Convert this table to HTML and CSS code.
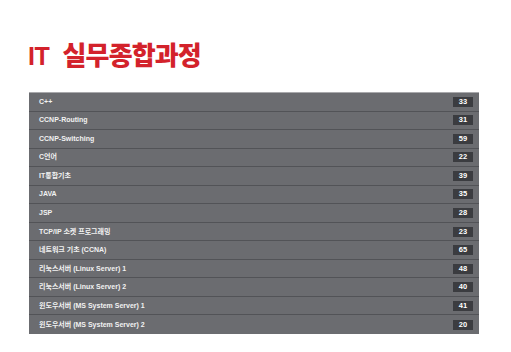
FILE: index.html
```html
<!DOCTYPE html>
<html lang="ko">
<head>
<meta charset="utf-8">
<link rel="stylesheet" href="styles.css">
</head>
<body>
<div class="page">
  <h1 class="title"><span class="latin">IT</span> 실무종합과정</h1>
  <ul class="list">
    <li class="row"><span class="name">C++</span><span class="badge">33</span></li>
    <li class="row"><span class="name">CCNP-Routing</span><span class="badge">31</span></li>
    <li class="row"><span class="name">CCNP-Switching</span><span class="badge">59</span></li>
    <li class="row"><span class="name">C언어</span><span class="badge">22</span></li>
    <li class="row"><span class="name">IT통합기초</span><span class="badge">39</span></li>
    <li class="row"><span class="name">JAVA</span><span class="badge">35</span></li>
    <li class="row"><span class="name">JSP</span><span class="badge">28</span></li>
    <li class="row"><span class="name">TCP/IP 소켓 프로그래밍</span><span class="badge">23</span></li>
    <li class="row"><span class="name">네트워크 기초 (CCNA)</span><span class="badge">65</span></li>
    <li class="row"><span class="name">리눅스서버 (Linux Server) 1</span><span class="badge">48</span></li>
    <li class="row"><span class="name">리눅스서버 (Linux Server) 2</span><span class="badge">40</span></li>
    <li class="row"><span class="name">윈도우서버 (MS System Server) 1</span><span class="badge">41</span></li>
    <li class="row"><span class="name">윈도우서버 (MS System Server) 2</span><span class="badge">20</span></li>
  </ul>
</div>
</body>
</html>
```

FILE: styles.css
```css
html, body {
  margin: 0;
  padding: 0;
  background: #ffffff;
}

.page {
  padding: 38px 32px 0 29px;
  width: 450px;
}

.title {
  margin: 0 0 0 -1px;
  height: 54px;
  font-family: "Noto Sans CJK KR", "Liberation Sans", sans-serif;
  font-weight: 900;
  font-size: 26px;
  line-height: 32px;
  color: #d3222b;
  letter-spacing: -0.9px;
  white-space: nowrap;
}

.title .latin {
  font-family: "Liberation Sans", sans-serif;
  font-weight: bold;
  font-size: 25px;
  letter-spacing: -0.5px;
  margin-right: 7px;
}

.list {
  list-style: none;
  margin: 0;
  padding: 0;
  height: 241px;
  display: grid;
  grid-template-rows: repeat(13, 1fr);
  border-top: 1px solid #a9a9ac;
  background: #6b6c70;
}

.row {
  display: flex;
  align-items: center;
  justify-content: space-between;
  padding: 0 6px 0 10px;
  border-bottom: 1px solid #525357;
  font-family: "Liberation Sans", "Noto Sans CJK KR", sans-serif;
  font-size: 7px;
  font-weight: bold;
  color: #f2f2f2;
}

.row:last-child {
  border-bottom: none;
}

.name {
  line-height: 10px;
}

.badge {
  width: 20px;
  height: 10px;
  background: #3b3c40;
  color: #ffffff;
  font-family: "Liberation Sans", sans-serif;
  font-size: 7.5px;
  line-height: 10px;
  text-align: center;
}
```
